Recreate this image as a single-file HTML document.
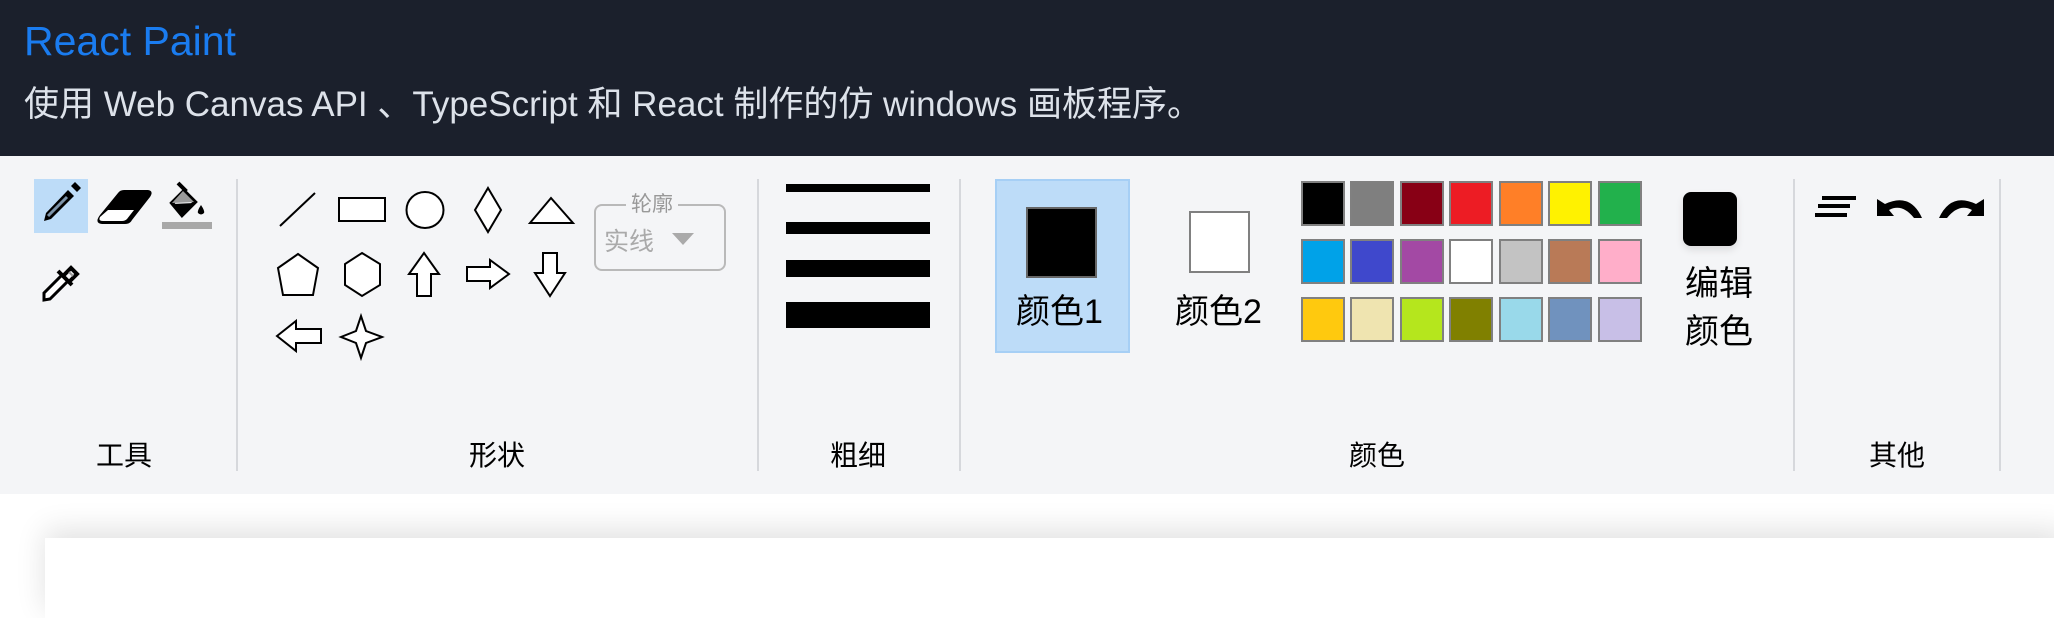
<!DOCTYPE html>
<html><head><meta charset="utf-8"><style>
*{margin:0;padding:0;box-sizing:border-box}
body{width:2054px;height:593px;overflow:hidden;background:#fff;font-family:"Liberation Sans","Noto Sans CJK SC",sans-serif;position:relative}
.hdr{position:absolute;left:0;top:0;width:2054px;height:156px;background:#1b202c}
.t{position:absolute;left:24px;top:18px;font-size:41px;color:#1a7cf0;white-space:nowrap}
.s{position:absolute;left:24px;top:76px;font-size:35px;color:#dde2ea;white-space:nowrap}
.bar{position:absolute;left:0;top:156px;width:2054px;height:338px;background:#f4f5f7}
.a{position:absolute}
.sep{position:absolute;top:179px;width:2px;height:292px;background:#d6d8dc}
.lbl{position:absolute;top:434px;font-size:28px;color:#000;white-space:nowrap;transform:translateX(-50%)}
.sw{position:absolute;width:44px;height:45px;border:2px solid #808080}
.canvas{position:absolute;left:45px;top:538px;width:2020px;height:80px;background:#fff;box-shadow:0 -8px 30px rgba(0,0,0,0.12)}
</style></head><body>
<div class="hdr"><div class="t">React Paint</div><div class="s">使用 Web Canvas API 、TypeScript 和 React 制作的仿 windows 画板程序。</div></div>
<div class="bar"></div>
<div class="canvas"></div>

<!-- tools -->
<div class="a" style="left:34px;top:179px;width:54px;height:54px;background:#bddcf8"></div>
<svg class="a" style="left:30px;top:175px" width="190" height="135" viewBox="0 0 190 135">
  <path d="M14 46 L16 38 L38 15 L44 21 L21 44 Z" fill="#000"/>
  <path d="M18 41 L37 22" stroke="#7d93a8" stroke-width="3"/>
  <path d="M41 11 L45 7 L51 13 L47 17 Z" fill="#000"/>
  <path d="M70 40 L88 18 Q90 15 94 15 L118 15 Q124 16 120 22 L102 45 Q100 49 95 49 L72 49 Q64 48 70 40 Z" fill="#000"/>
  <path d="M70 42 L78 35 L104 35 L97 44 Q95 46 92 46 L73 46 Q68 46 70 42 Z" fill="#fff"/>
  <path d="M148 8 L155 15 L142 28 L152 40 L165 27 L153 15" fill="none" stroke="#000" stroke-width="4"/>
  <path d="M142 28 L153 16 L164 27 Z" fill="#9a9a9a"/>
  <path d="M143 29 L164 28 L152 40 Z" fill="#000"/>
  <path d="M171 30 Q167 36 168 38 Q171 41 174 38 Q175 36 171 30Z" fill="#000"/>
  <rect x="132" y="47" width="50" height="7" fill="#a8a8a8"/>
  <path d="M14 125 L14 118 L32 100 L38 106 L20 124 Z" fill="#fff" stroke="#000" stroke-width="3"/>
  <path d="M28 96 L42 110 M33 101 L41 93 L47 99 L39 107" stroke="#000" stroke-width="4" fill="none"/>
  <path d="M39 97 L43 101" stroke="#999" stroke-width="2"/>
</svg>
<div class="lbl" style="left:124px">工具</div>
<div class="sep" style="left:236px"></div>

<!-- shapes -->
<svg class="a" style="left:270px;top:180px" width="320" height="190" viewBox="270 180 320 190" fill="#fff" stroke="#000" stroke-width="2">
 <line x1="280" y1="226" x2="315" y2="193"/>
 <rect x="339" y="198" width="46" height="23"/>
 <ellipse cx="425" cy="210" rx="18.5" ry="18"/>
 <path d="M488 188 L501 210 L488 232 L475 210 Z"/>
 <path d="M551 198 L573 223 L530 223 Z"/>
 <path d="M298 254 L318 268 L313 295 L283 295 L278 268 Z"/>
 <path d="M362 253 L380 264 L380 285 L362 296 L345 285 L345 264 Z"/>
 <path d="M424 253 L439 274 L431 274 L431 296 L417 296 L417 274 L409 274 Z"/>
 <path d="M509 274 L490 260 L490 267 L467 267 L467 281 L490 281 L490 288 Z"/>
 <path d="M550 296 L565 273 L557 273 L557 253 L543 253 L543 273 L535 273 Z"/>
 <path d="M277 336 L296 321 L296 329 L321 329 L321 343 L296 343 L296 351 Z"/>
 <path d="M361 316 L366 331 L382 337 L366 343 L361 358 L356 343 L341 337 L356 331 Z"/>
</svg>
<div class="a" style="left:594px;top:204px;width:132px;height:67px;border:2px solid #b9b9b9;border-radius:8px"></div>
<div class="a" style="left:626px;top:188px;padding:0 5px;background:#f4f5f7;font-size:21px;color:#999">轮廓</div>
<div class="a" style="left:604px;top:222px;font-size:25px;color:#aaa">实线</div>
<svg class="a" style="left:672px;top:233px" width="22" height="12"><path d="M0 0 L22 0 L11 12 Z" fill="#aaa"/></svg>
<div class="lbl" style="left:497px">形状</div>
<div class="sep" style="left:757px"></div>

<!-- thickness -->
<div class="a" style="left:786px;top:184px;width:144px;height:8px;background:#000"></div>
<div class="a" style="left:786px;top:222px;width:144px;height:12px;background:#000"></div>
<div class="a" style="left:786px;top:260px;width:144px;height:17px;background:#000"></div>
<div class="a" style="left:786px;top:302px;width:144px;height:26px;background:#000"></div>
<div class="lbl" style="left:858px">粗细</div>
<div class="sep" style="left:959px"></div>

<!-- colors -->
<div class="a" style="left:995px;top:179px;width:135px;height:174px;background:#bddcf8;border:2px solid #a6cff5"></div>
<div class="a" style="left:1026px;top:207px;width:71px;height:71px;background:#000;border:2px solid #666"></div>
<div class="a" style="left:1016px;top:284px;font-size:34px">颜色1</div>
<div class="a" style="left:1189px;top:211px;width:61px;height:62px;background:#fff;border:2px solid #808080"></div>
<div class="a" style="left:1175px;top:284px;font-size:34px">颜色2</div>

<div class="sw" style="left:1301px;top:181px;background:#000"></div>
<div class="sw" style="left:1350px;top:181px;background:#7f7f7f"></div>
<div class="sw" style="left:1400px;top:181px;background:#880015"></div>
<div class="sw" style="left:1449px;top:181px;background:#ed1c24"></div>
<div class="sw" style="left:1499px;top:181px;background:#ff7f27"></div>
<div class="sw" style="left:1548px;top:181px;background:#fff200"></div>
<div class="sw" style="left:1598px;top:181px;background:#22b14c"></div>
<div class="sw" style="left:1301px;top:239px;background:#00a2e8"></div>
<div class="sw" style="left:1350px;top:239px;background:#3f48cc"></div>
<div class="sw" style="left:1400px;top:239px;background:#a349a4"></div>
<div class="sw" style="left:1449px;top:239px;background:#fff"></div>
<div class="sw" style="left:1499px;top:239px;background:#c3c3c3"></div>
<div class="sw" style="left:1548px;top:239px;background:#b97a57"></div>
<div class="sw" style="left:1598px;top:239px;background:#ffaec9"></div>
<div class="sw" style="left:1301px;top:297px;background:#ffc90e"></div>
<div class="sw" style="left:1350px;top:297px;background:#efe4b0"></div>
<div class="sw" style="left:1400px;top:297px;background:#b5e61d"></div>
<div class="sw" style="left:1449px;top:297px;background:#808000"></div>
<div class="sw" style="left:1499px;top:297px;background:#99d9ea"></div>
<div class="sw" style="left:1548px;top:297px;background:#7092be"></div>
<div class="sw" style="left:1598px;top:297px;background:#c8bfe7"></div>

<div class="a" style="left:1683px;top:192px;width:54px;height:54px;background:#000;border-radius:8px;box-shadow:0 4px 8px rgba(0,0,0,0.1)"></div>
<div class="a" style="left:1685px;top:260px;font-size:34px;line-height:48px">编辑<br>颜色</div>
<div class="lbl" style="left:1377px">颜色</div>
<div class="sep" style="left:1793px"></div>

<!-- other -->
<svg class="a" style="left:1810px;top:190px" width="190" height="35" viewBox="1810 190 190 35">
 <rect x="1822" y="196" width="34" height="4" fill="#000"/>
 <rect x="1818" y="204" width="32" height="4" fill="#000"/>
 <rect x="1815" y="213" width="32" height="4" fill="#000"/>
 <path d="M1877 199 L1877 216 L1894 216 L1889 210 Q1902 203 1914 218 L1922 218 Q1910 192 1885 204 Z" fill="#000"/>
 <path d="M1984 199 L1984 216 L1967 216 L1972 210 Q1959 203 1947 218 L1939 218 Q1951 192 1976 204 Z" fill="#000"/>
</svg>
<div class="lbl" style="left:1897px">其他</div>
<div class="sep" style="left:1999px"></div>
</body></html>
